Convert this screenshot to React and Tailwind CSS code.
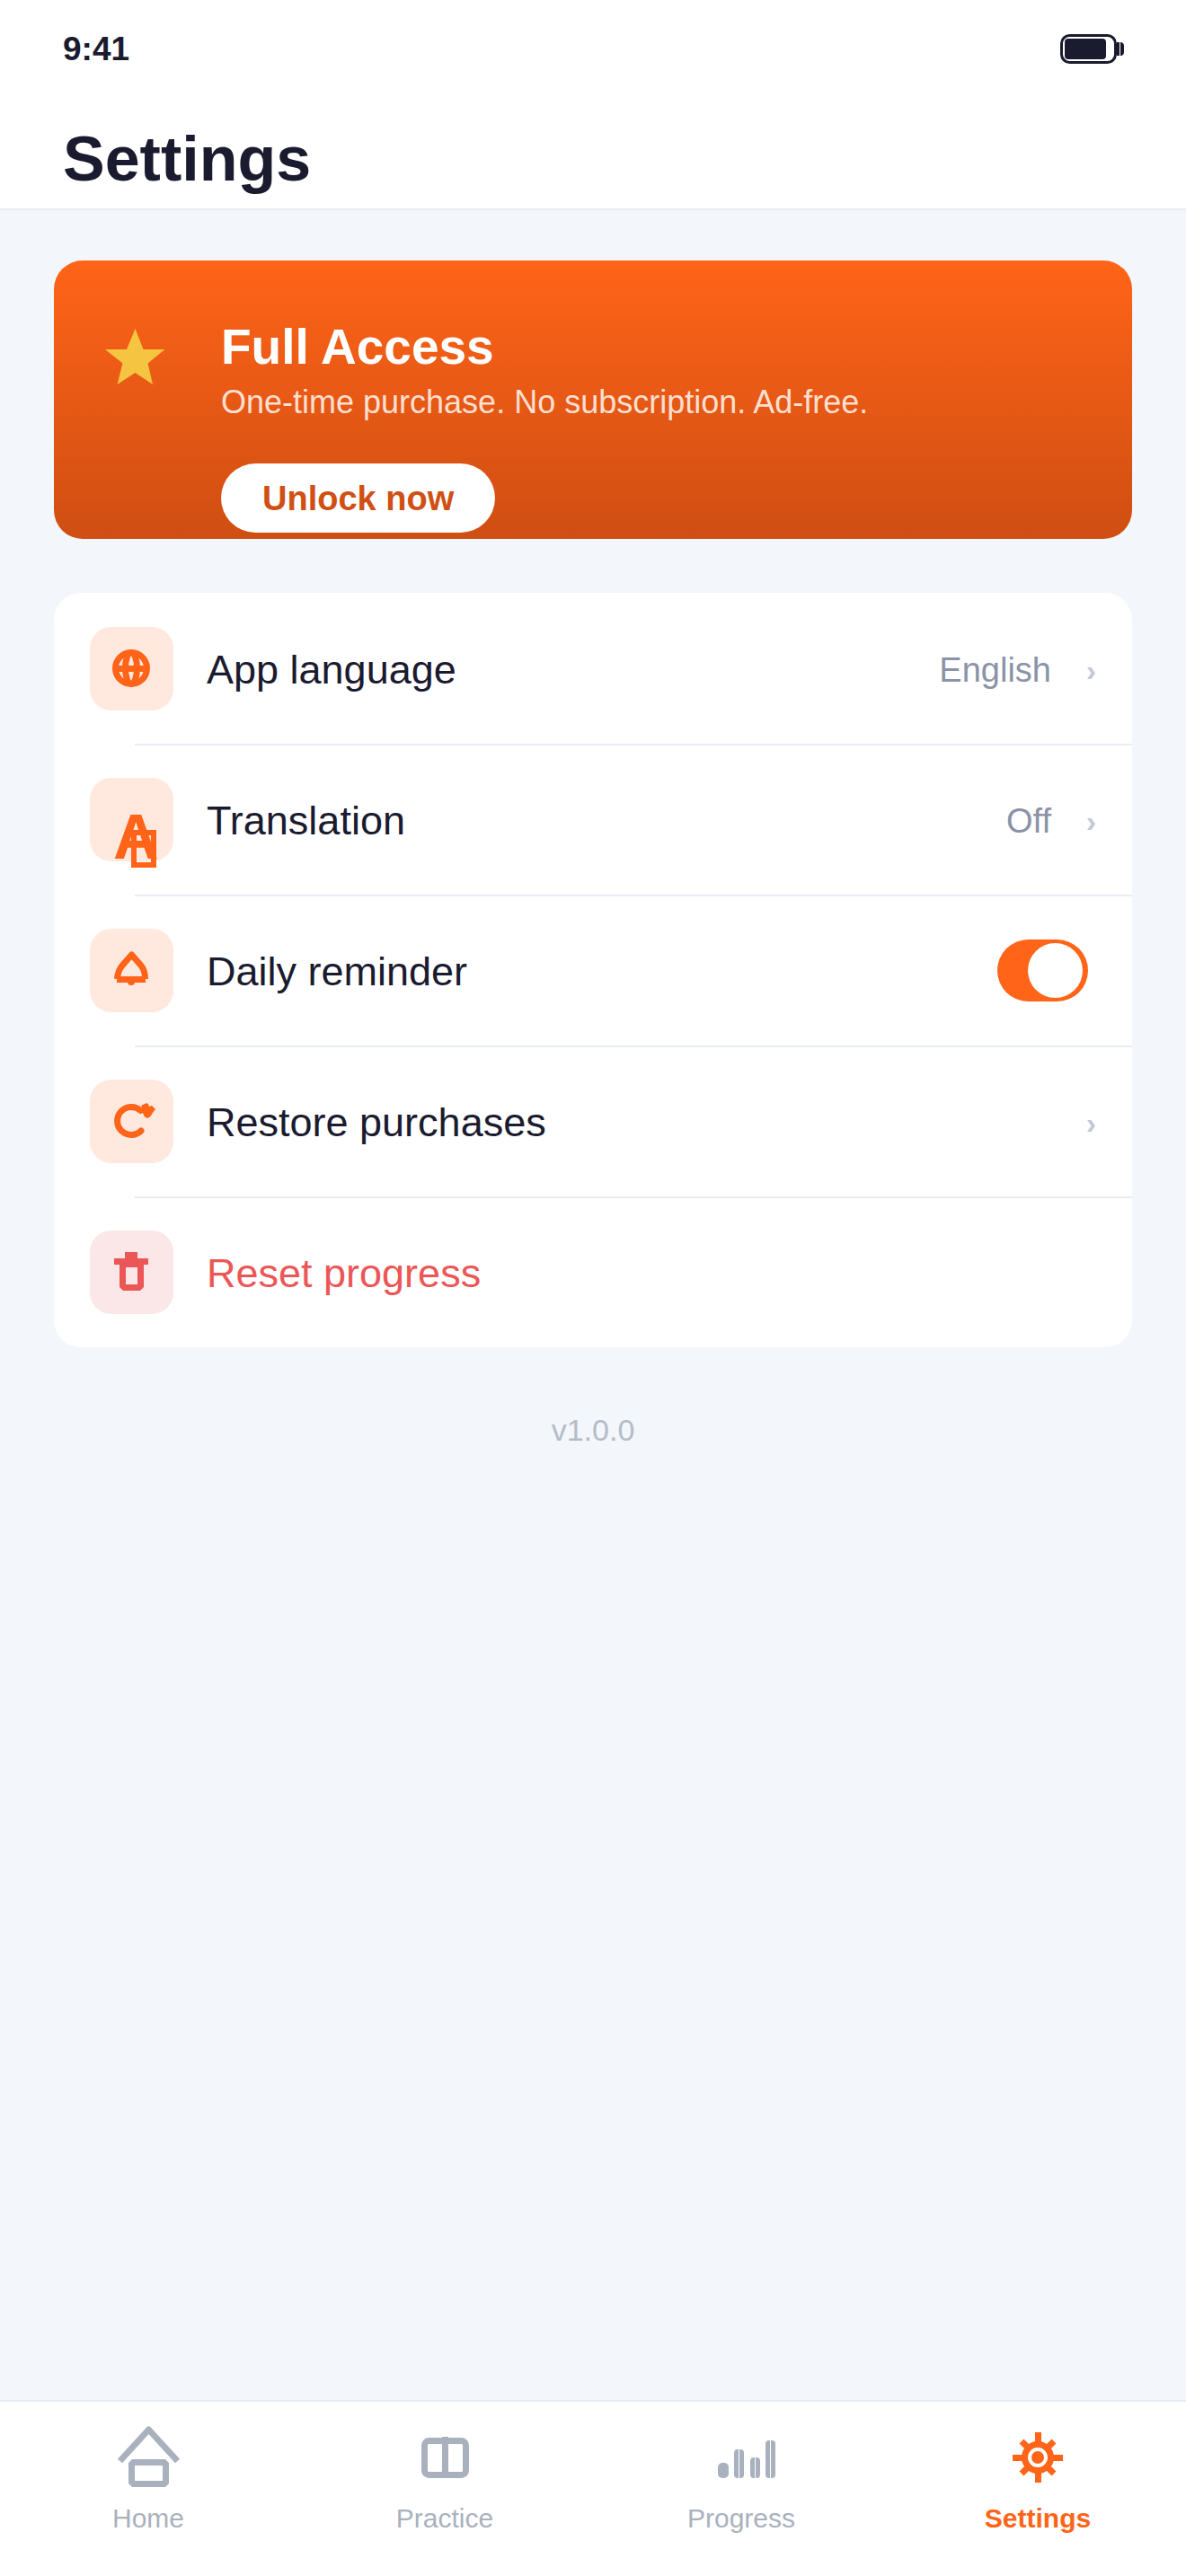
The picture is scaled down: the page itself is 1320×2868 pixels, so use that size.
import { useState } from "react";

function BatteryIcon() {
  return (
    <svg width="72" height="34" viewBox="0 0 72 34" fill="#1b1b2f" aria-label="Battery" role="img">
      <rect x="1.5" y="1.5" width="60" height="30" rx="9" fill="none" stroke="#1b1b2f" strokeWidth="3" />
      <rect x="5" y="5" width="46" height="23" rx="4" />
      <rect x="63" y="9" width="3" height="15" />
      <path d="M67 9h1q3 1 3 4v7q0 3-3 4h-1z" />
    </svg>
  );
}

function StarIcon() {
  return (
    <svg className="mt-3 shrink-0" width="68" height="64" viewBox="0 0 68 64" fill="#f5c542" aria-hidden="true">
      <path d="M34.500 0L43.500 23H67.500L48.500 38.500L54 62L34.500 49L14.500 62L20.500 38.500L1 23H25z" />
    </svg>
  );
}

function GlobeIcon() {
  return (
    <g fill="none" stroke="currentColor" strokeWidth="7">
      <circle cx="46" cy="46" r="17.5" />
      <ellipse cx="46" cy="46" rx="6.500" ry="17.5" />
      <path d="M28 46.500h36" />
    </g>
  );
}

function TranslateIcon() {
  return (
    <g fill="currentColor">
      <text x="26" y="90" fontSize="70" fontWeight="700">A</text>
      <rect x="49" y="61" width="22" height="36" fill="none" stroke="currentColor" strokeWidth="6" />
    </g>
  );
}

function BellIcon() {
  return (
    <g fill="none" stroke="currentColor" strokeWidth="7">
      <path d="M30.500 56C31 48 33 44.500 36 41L46.500 29L57 41C60 44.500 61.500 48 61.500 56" strokeLinejoin="round" />
      <path d="M30 56.500h32" />
      <circle cx="46" cy="59" r="4" fill="currentColor" stroke="none" />
    </g>
  );
}

function RestoreIcon() {
  return (
    <g>
      <path d="M57 57A15.500 15.500 0 1 1 56.500 34.500" fill="none" stroke="currentColor" strokeWidth="7" strokeLinecap="round" />
      <path d="M57.500 28.500L63.500 26L65.500 28L66 30L69 29L73 33L69.500 37.500L67.500 41L64 43L61 41.500L58 35z" fill="currentColor" />
    </g>
  );
}

function TrashIcon() {
  return (
    <path
      fill="currentColor"
      fillRule="evenodd"
      d="M39 24H53V31H65V38H60V63L56 67H37L33 63V38H27V31H39zM40 41H53V60H40z"
    />
  );
}

function HomeIcon() {
  return (
    <g fill="none" stroke="currentColor" strokeWidth="7">
      <path d="M4.500 40L36.500 5L68.500 40" strokeLinejoin="round" />
      <path fill="currentColor" stroke="none" fillRule="evenodd" d="M18 38H55L59 42V65L55 69H18L14 65V42zM21 45V62H52V45z" />
    </g>
  );
}

function BookIcon() {
  return (
    <g fill="none" stroke="currentColor" strokeWidth="7">
      <rect x="13.500" y="17.500" width="46" height="38" rx="5" />
      <path d="M36.500 13V59" />
    </g>
  );
}

function BarsIcon() {
  return (
    <g fill="currentColor">
      <rect x="10" y="42" width="12" height="17" rx="5" />
      <rect x="28" y="27" width="11" height="32" rx="4" />
      <rect x="46" y="36" width="11" height="23" rx="4" />
      <rect x="63" y="17" width="11" height="42" rx="4" />
      <path d="M33.500 27v32M51.500 36v23M68.500 17v42" stroke="#ffffff" />
    </g>
  );
}

function GearIcon() {
  return (
    <g fill="none" stroke="currentColor" strokeWidth="7">
      <circle cx="36" cy="36" r="14.500" />
      <path d="M36.500 8V22M36.500 50V64M8 36.500H22M50 36.500H64M18 18L27 27M54 18L45 27M18 54L27 45M54 54L45 45" />
      <circle cx="36" cy="36" r="7" fill="currentColor" stroke="none" />
    </g>
  );
}

function Row({ icon, label, value, chevron, danger, last, children }) {
  const Tag = children ? "label" : "button";
  return (
    <li className="relative">
      <Tag className="flex h-[168px] w-full cursor-pointer items-center pr-10 pl-10 text-left">
        <span
          className={
            danger
              ? "size-[93px] shrink-0 rounded-3xl bg-[#fbe7e7] text-[#eb5757]"
              : "size-[93px] shrink-0 rounded-3xl bg-[#ffe8de] text-[#ff6418]"
          }
        >
          <svg className="block overflow-visible" width="93" height="93" viewBox="0 0 93 93" aria-hidden="true">
            {icon}
          </svg>
        </span>
        <span className={danger ? "ml-[37px] flex-1 pt-1 text-[45px] leading-[52px] text-[#eb5757]" : "ml-[37px] flex-1 pt-1 text-[45px] leading-[52px]"}>
          {label}
        </span>
        {value && <span className="mr-[34px] pt-1 text-[38px] leading-[52px] text-[#8b93a7]">{value}</span>}
        {chevron && (
          <span aria-hidden="true" className="w-4 pt-1 text-right text-[34px] leading-[52px] font-bold text-[#c3c8d6]">
            ›
          </span>
        )}
        {children}
      </Tag>
      {!last && <div className="absolute right-0 -bottom-0.5 left-[90px] z-10 h-0.5 bg-[#e8ecf2]" />}
    </li>
  );
}

function Tab({ icon, label, active }) {
  return (
    <a
      href="#"
      aria-current={active ? "page" : undefined}
      className={
        active
          ? "flex flex-1 flex-col items-center gap-3.5 font-bold text-[#ff6418]"
          : "flex flex-1 flex-col items-center gap-3.5 text-[#a9b1be]"
      }
    >
      <svg className="overflow-visible" width="72" height="72" viewBox="0 0 72 72" aria-hidden="true">
        {icon}
      </svg>
      <span className="text-[30px] leading-9">{label}</span>
    </a>
  );
}

export default function App() {
  const [reminder, setReminder] = useState(true);
  return (
    <div className="flex min-h-screen flex-col bg-[#f3f6fb] font-['Liberation_Sans',Arial,sans-serif] text-[#1b1b2f]">
      <header className="border-b-2 border-[#e8ecf2] bg-white px-[70px] pt-[31px] pb-[15px]">
        <div className="flex items-center justify-between">
          <span className="text-[37px] leading-[48px] font-bold">9:41</span>
          <div className="-mr-0.5">
            <BatteryIcon />
          </div>
        </div>
        <h1 className="mt-[58px] text-[70px] leading-[80px] font-bold">Settings</h1>
      </header>

      <main className="flex-1 px-[60px] pt-14">
        <section className="flex items-start gap-[62px] rounded-[32px] bg-linear-to-b from-[#ff6418] to-[#cf4e12] pt-16 pr-14 pb-[7px] pl-14">
          <StarIcon />
          <div>
            <h2 className="text-[55px] leading-[64px] font-bold text-white">Full Access</h2>
            <p className="mt-2 text-[36px] leading-[44px] text-[#ffdfd0]">
              One-time purchase. No subscription. Ad-free.
            </p>
            <button className="mt-[46px] block h-[77px] rounded-full bg-white px-[46px] text-[38px] leading-[48px] font-bold text-[#d05014]">
              Unlock now
            </button>
          </div>
        </section>

        <ul className="mt-[60px] rounded-[30px] bg-white">
          <Row icon={<GlobeIcon />} label="App language" value="English" chevron />
          <Row icon={<TranslateIcon />} label="Translation" value="Off" chevron />
          <Row icon={<BellIcon />} label="Daily reminder">
            <input
              type="checkbox"
              role="switch"
              checked={reminder}
              onChange={(e) => setReminder(e.target.checked)}
              className="peer sr-only"
            />
            <span className="mr-[9px] flex h-[69px] w-[101px] items-center rounded-full bg-[#c3c8d6] px-1.5 peer-checked:justify-end peer-checked:bg-[#ff6418]">
              <span className="size-[61px] rounded-full bg-white" />
            </span>
          </Row>
          <Row icon={<RestoreIcon />} label="Restore purchases" chevron />
          <Row icon={<TrashIcon />} label="Reset progress" danger last />
        </ul>

        <p className="mt-[70px] text-center text-[34px] leading-[44px] text-[#b3bcc8]">v1.0.0</p>
      </main>

      <nav className="flex border-t-2 border-[#e8ecf2] bg-white pt-[26px] pb-[46px]">
        <Tab icon={<HomeIcon />} label="Home" />
        <Tab icon={<BookIcon />} label="Practice" />
        <Tab icon={<BarsIcon />} label="Progress" />
        <Tab icon={<GearIcon />} label="Settings" active />
      </nav>
    </div>
  );
}
